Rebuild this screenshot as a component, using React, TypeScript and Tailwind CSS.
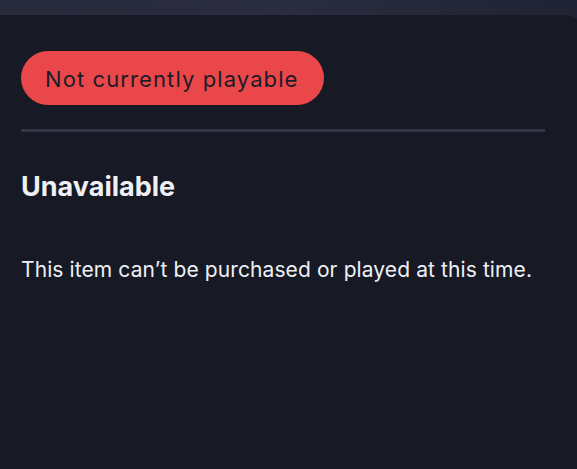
export default function App() {
  return (
    <div className="h-[469px] w-[577px] overflow-hidden bg-gradient-to-r from-[#272a3b] via-[#2a2d3f] to-[#202333] font-['Inter',sans-serif]">
      <div className="mt-[15px] h-[454px] w-[590px] rounded-tr-[28px] bg-[#171a25] px-[21px] pt-[36px]">
        <div className="inline-flex h-[54px] items-center rounded-full bg-[#ea474a] pt-[2px] pl-6 pr-[25px] text-[22px] tracking-[1.1px] text-[#1a1d28]">
          Not currently playable
        </div>
        <div className="mt-[24px] h-[3px] w-[524px] bg-[#333546]" />
        <h2 className="mt-[38px] text-[27px] leading-[34px] font-bold text-[#eef0f5]">Unavailable</h2>
        <p className="mt-[52px] text-[21px] leading-[28px] tracking-[0.1px] text-[#eef0f5]">
          This item can’t be purchased or played at this time.
        </p>
      </div>
    </div>
  );
}
